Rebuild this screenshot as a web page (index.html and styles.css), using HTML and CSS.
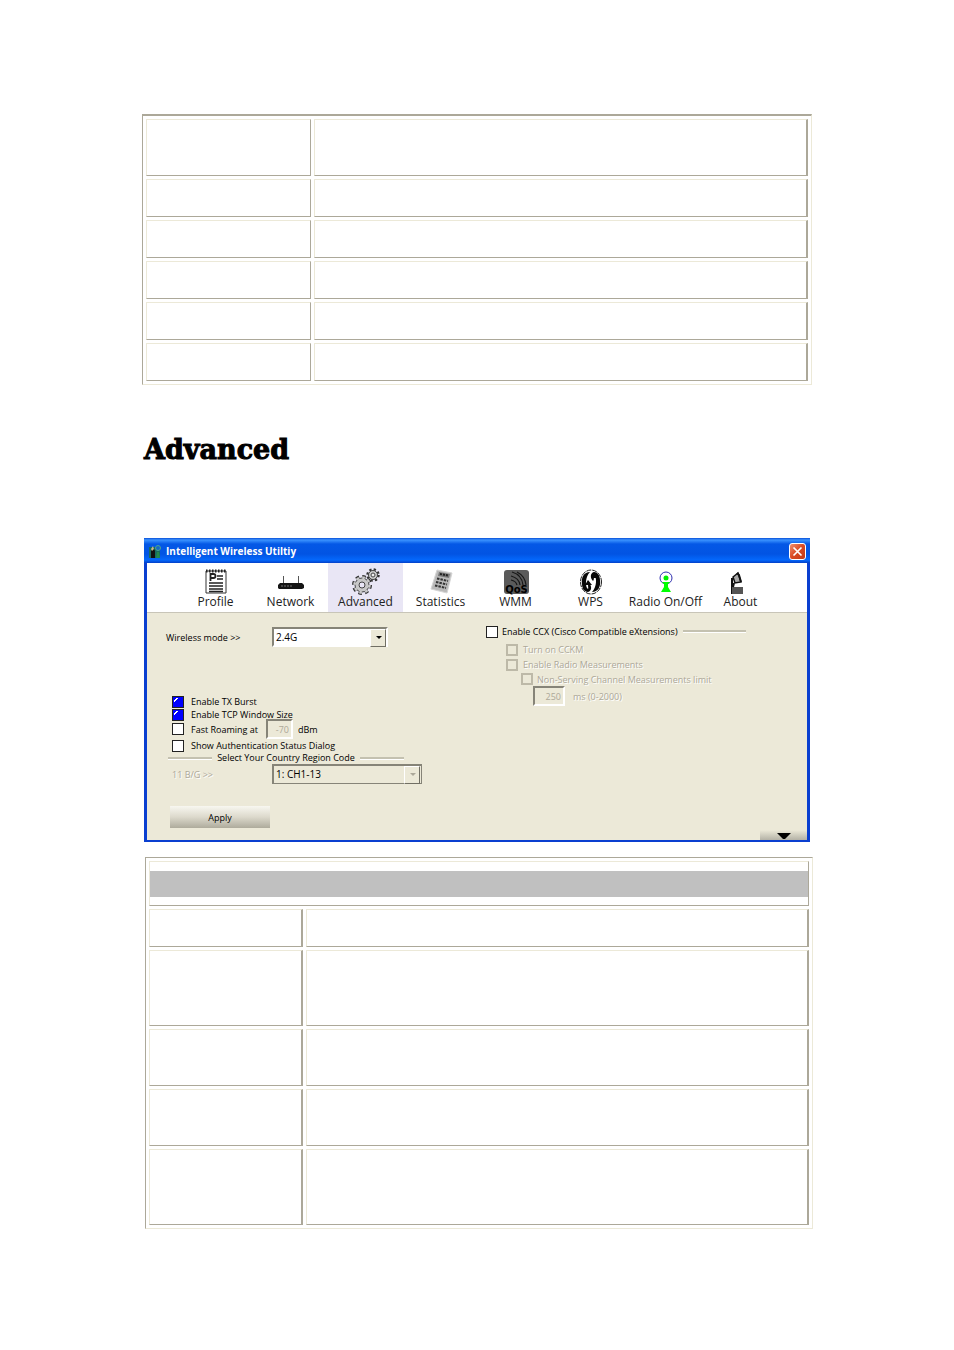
FILE: index.html
```html
<!DOCTYPE html>
<html lang="en">

<head>
  <meta charset="UTF-8">
  <meta name="viewport" content="width=device-width, initial-scale=1.0">
  <title>Advanced</title>
  <link rel="stylesheet" href="styles.css">
</head>

<body>
  <table class="grid settings">
    <tr class="medium"><td class="name"></td><td></td></tr>
    <tr><td class="name"></td><td></td></tr>
    <tr><td class="name"></td><td></td></tr>
    <tr><td class="name"></td><td></td></tr>
    <tr><td class="name"></td><td></td></tr>
    <tr><td class="name"></td><td></td></tr>
  </table>

  <h1>Advanced</h1>

  <div class="window">
    <div class="titlebar">
      <svg width="15" height="15" viewBox="0 0 15 15">
        <rect x="1" y="3" width="11" height="11" fill="#176c62"/>
        <path d="M3 14V7l2-4 2 4v7z" fill="#111"/>
        <path d="M3 5l2-3 1 3-2 2z" fill="#c9b98a"/>
        <circle cx="10" cy="4" r="2.5" fill="#1769c8" stroke="#4aa58f"/>
        <path d="M9 8h2l1 6H8z" fill="#238a50"/>
      </svg>
      <span class="title">Intelligent Wireless Utiltiy</span>
      <button class="close" aria-label="Close">
        <svg width="11" height="11" viewBox="0 0 11 11"><path d="M1.5 1.5l8 8M9.5 1.5l-8 8" stroke="#fff" stroke-width="1.700"/></svg>
      </button>
    </div>

    <nav class="toolbar">
      <button class="tab">
        <svg width="26" height="27" viewBox="0 0 26 27">
          <path d="M3 3h20v22H3z" fill="#fff" stroke="#333"/>
          <path d="M3 3h21" stroke="#222" stroke-width="3" stroke-dasharray="1.5 1.5"/>
          <path d="M7.500 13V6h3a2 2 0 0 1 0 4h-3" fill="none" stroke="#222" stroke-width="1.800"/>
          <path d="M14 8h6M14 11h6M6 15h14M6 18h14M6 21h14M6 23.500h14" stroke="#222" stroke-width="1.300"/>
        </svg>
        Profile
      </button>
      <button class="tab">
        <svg width="28" height="27" viewBox="0 0 28 27">
          <path d="M6.500 8v8M21.500 8v8" stroke="#555"/>
          <path d="M3 15h22l2 2v3l-2 1H2l-1-1v-3z" fill="#151515"/>
          <path d="M4 18h12" stroke="#777" stroke-dasharray="2 1"/>
        </svg>
        Network
      </button>
      <button class="tab active">
        <svg width="30" height="27" viewBox="0 0 30 27">
          <circle cx="11" cy="17" r="8" fill="none" stroke="#333" stroke-width="4" stroke-dasharray="3.300 2.983"/>
          <circle cx="11" cy="17" r="7" fill="#c7c7c7" stroke="#444"/>
          <circle cx="11" cy="17" r="7.500" fill="none" stroke="#ccc" stroke-width="2.500" stroke-dasharray="2.600 3.290"/>
          <circle cx="11" cy="17" r="3" fill="#e9e6f6" stroke="#444"/>
          <circle cx="22" cy="7" r="5.500" fill="none" stroke="#333" stroke-width="2.500" stroke-dasharray="2.200 2.120"/>
          <circle cx="22" cy="7" r="4.500" fill="#ccc" stroke="#444"/>
          <circle cx="22" cy="7" r="2" fill="#eee" stroke="#444"/>
        </svg>
        Advanced
      </button>
      <button class="tab">
        <svg width="26" height="27" viewBox="0 0 26 27">
          <path d="M9 2l15 3-5 20-16-4z" fill="#b9b9b9" stroke="#d5d5d5"/>
          <path d="M11 4l11 2-1 4-11-2z" fill="#777"/>
          <path d="M12 6l8 1.500" stroke="#222" stroke-width="2" stroke-dasharray="2 1"/>
          <path d="M9 10.500l11 2.500M8 14l11 2.500M7 17.500l11 2.500" stroke="#333" stroke-width="2" stroke-dasharray="2.500 1"/>
        </svg>
        Statistics
      </button>
      <button class="tab">
        <svg width="26" height="27" viewBox="0 0 26 27">
          <rect x="1" y="2" width="25" height="24" rx="3" fill="#5a5a5a"/>
          <path d="M9 4q10 3 11 13M8 8q8 2 9 9M8 12q5 1 6 5M14 4q8 4 9 13" fill="none" stroke="#171717" stroke-width="1.200"/>
          <text class="qos" x="13.500" y="25" text-anchor="middle">QoS</text>
        </svg>
        WMM
      </button>
      <button class="tab">
        <svg width="26" height="27" viewBox="0 0 26 27">
          <ellipse cx="13" cy="14" rx="10.500" ry="12" fill="#fff" stroke="#222" stroke-dasharray="5 1"/>
          <path d="M12 4C6 4 3 9 4 16c0 5 3 8 6 8 4-1 4-6 1-9-2 2 0 5-1 6-3-2-3-12 2-17z" fill="#080808"/>
          <path d="M10 12l4 5H7z" fill="#080808"/>
          <path d="M14 24c6 0 9-5 8-12 0-5-3-8-6-8-4 1-4 6-1 9 2-2 0-5 1-6 3 2 3 12-2 17z" fill="#080808"/>
          <path d="M16 4l5 6h-8z" fill="#080808"/>
        </svg>
        WPS
      </button>
      <button class="tab">
        <svg width="26" height="27" viewBox="0 0 26 27">
          <circle cx="13" cy="10" r="6" fill="#fff" stroke="#3030b0"/>
          <circle cx="13" cy="10" r="2.500" fill="#00f000"/>
          <path d="M9 14h8l-2 2v3l3 5H8l3-5v-3z" fill="#0f0"/>
        </svg>
        Radio On/Off
      </button>
      <button class="tab">
        <svg width="26" height="27" viewBox="0 0 26 27">
          <path d="M4 10v16" stroke="#111" stroke-width="2"/>
          <rect x="4" y="19" width="11" height="7" fill="#555"/>
          <path d="M5 9l5-4 3 9-6 1z" fill="#aaa" stroke="#111" stroke-width="1.500"/>
          <path d="M9 5l2 2 2 7M6 15l-1 4" fill="none" stroke="#111" stroke-width="2"/>
        </svg>
        About
      </button>
    </nav>

    <form class="panel">
      <div class="left">
        <div class="row mode">
          <label class="caption" for="mode">Wireless mode &gt;&gt;</label>
          <span class="select"><select id="mode"><option>2.4G</option></select></span>
        </div>

        <div class="checks">
          <label class="row"><input type="checkbox" checked>Enable TX Burst</label>
          <label class="row"><input type="checkbox" checked>Enable TCP Window Size</label>
          <div class="row roaming">
            <input type="checkbox" id="roaming"><label for="roaming">Fast Roaming at</label>
            <input type="text" class="dbm" value="-70" aria-label="Roaming threshold" disabled>
            <span>dBm</span>
          </div>
          <label class="row"><input type="checkbox">Show Authentication Status Dialog</label>
        </div>

        <div class="divider">Select Your Country Region Code</div>

        <div class="row region">
          <label class="caption off" for="region">11 B/G &gt;&gt;</label>
          <span class="select wide"><select id="region" disabled><option>1: CH1-13</option></select></span>
        </div>

        <button type="button" class="apply">Apply</button>
      </div>

      <div class="right">
        <div class="row ccx"><input type="checkbox" id="ccx"><label for="ccx">Enable CCX (Cisco Compatible eXtensions)</label></div>
        <label class="row off indent"><input type="checkbox" disabled>Turn on CCKM</label>
        <label class="row off indent"><input type="checkbox" disabled>Enable Radio Measurements</label>
        <label class="row off limit"><input type="checkbox" disabled>Non-Serving Channel Measurements limit</label>
        <label class="row off ms"><input type="text" value="250" disabled>ms (0-2000)</label>
      </div>

      <button type="button" class="expand" aria-label="Expand">
        <svg width="14" height="7" viewBox="0 0 14 7"><path d="M0 0h14L8 6H6z" fill="#000"/></svg>
      </button>
    </form>
  </div>

  <table class="grid options">
    <colgroup><col class="name"><col></colgroup>
    <tr class="head"><th colspan="2"><div class="band"></div></th></tr>
    <tr><td></td><td></td></tr>
    <tr class="tall"><td></td><td></td></tr>
    <tr class="medium"><td></td><td></td></tr>
    <tr class="medium"><td></td><td></td></tr>
    <tr class="tall"><td></td><td></td></tr>
  </table>
</body>

</html>
```
FILE: styles.css
```css
* {
  box-sizing: border-box;
}

body {
  margin: 0;
  padding: 114px 142px 120px;
  background: #fff;
  color: #000;
  font-family: "Open Sans", sans-serif;
}

button,
input,
select {
  font: inherit;
  margin: 0;
}

/* bordered tables */
.grid {
  width: 100%;
  table-layout: fixed;
  border-collapse: separate;
  border-spacing: 3px;
  border: 1px solid;
  border-color: #aca899 #ece9d8 #ece9d8 #aca899;
}

.grid td,
.grid th {
  height: 38px;
  padding: 0;
  border: 1px solid;
  border-color: #ece9d8 #aca899 #aca899 #ece9d8;
}

.grid td:last-child,
.options td {
  border-right-width: 2px;
}

.grid .name {
  width: 165px;
}

.grid .medium td {
  height: 57px;
}

.grid .tall td {
  height: 76px;
}

.settings {
  border-top-width: 2px;
}

.options {
  width: calc(100% - 2px);
  margin: 15px 0 0 3px;
}

.options .name {
  width: 154px;
}

.grid th {
  height: 45px;
}

.band {
  height: 26px;
  background: #c0c0c0;
}

h1 {
  margin: 46px 2px 69px;
  font-family: "DejaVu Serif", serif;
  font-size: 27px;
  font-weight: bold;
  line-height: 38px;
  -webkit-text-stroke: 1px #000;
}

/* utility window */
.window {
  margin: 0 2px;
  border: solid #0a3fd0;
  border-width: 0 3px 2px;
  background: #ece9d8;
  font-size: 9px;
}

.titlebar {
  display: flex;
  align-items: center;
  gap: 3px;
  height: 25px;
  margin: 0 -3px;
  padding: 1px 4px 0;
  background: linear-gradient(#0a4fd8, #3a93ff 2px, #0458e6 6px, #0254e3 16px, #0468fc 22px, #0340c8);
}

.title {
  flex: 1;
  color: #fff;
  font-size: 10px;
  font-weight: bold;
}

.close {
  display: flex;
  align-items: center;
  justify-content: center;
  width: 17px;
  height: 17px;
  padding: 0;
  border: 1px solid #fff;
  border-radius: 3px;
  background: linear-gradient(135deg, #f09070, #d94a22 50%, #c03a18);
}

.toolbar {
  display: flex;
  height: 50px;
  padding-left: 31px;
  background: #fff;
  border-bottom: 1px solid #c8c5b8;
}

.tab {
  display: flex;
  flex-direction: column;
  align-items: center;
  width: 75px;
  padding: 5px 0 0;
  border: 0;
  background: none;
  color: #222;
  font-size: 12px;
  line-height: 14px;
  white-space: nowrap;
}

.tab.active {
  background: #e9e6f5;
}

.qos {
  font: bold 10px "DejaVu Sans", sans-serif;
}

.panel {
  position: relative;
  display: flex;
  padding: 12px 18px 12px 19px;
  line-height: 13px;
}

.left {
  width: 320px;
}

.right {
  flex: 1;
}

.row {
  display: flex;
  align-items: center;
  white-space: nowrap;
}

.caption {
  width: 106px;
}

.off {
  color: #aca899;
  text-shadow: 1px 1px #fff;
}

.mode {
  height: 24px;
}

.region .caption {
  padding-left: 6px;
}

.select {
  position: relative;
  width: 116px;
}

.select.wide {
  width: 150px;
}

.select select {
  display: block;
  width: 100%;
  height: 20px;
  padding: 0 2px;
  appearance: none;
  border: 2px solid;
  border-color: #868478 #fff #fff #868478;
  border-radius: 0;
  background: #fff;
  color: #000;
  font-size: 10px;
}

.select select:disabled {
  background: #ece9d8;
  border-width: 2px 1px 1px 2px;
  border-color: #868478;
  opacity: 1;
}

.select::before {
  content: "";
  position: absolute;
  top: 2px;
  right: 2px;
  width: 14px;
  height: 16px;
  border: 1px solid;
  border-color: #fff #716f64 #716f64 #fff;
  background: #ece9d8;
  pointer-events: none;
}

.select::after {
  content: "";
  position: absolute;
  top: 9px;
  right: 6px;
  border: 3px solid transparent;
  border-top-color: #000;
  border-bottom: 0;
  pointer-events: none;
}

.select.wide::after {
  border-top-color: #aca899;
}

input[type="checkbox"] {
  flex: none;
  width: 12px;
  height: 12px;
  margin-right: 7px;
  appearance: none;
  border: 1px solid #222;
  background: #fff;
}

input[type="checkbox"]:checked {
  background: linear-gradient(135deg, #00f 20%, #fff 20%, #fff 35%, #00f 35%) no-repeat 1px 1px / 6px 6px #00f;
}

input[type="checkbox"]:disabled {
  border: 2px solid #bdb9a8;
  background: #ece9d8;
}

input[type="text"] {
  height: 20px;
  padding: 0 2px;
  border: 2px solid;
  border-color: #868478 #fff #fff #868478;
  background: #ece9d8;
  color: #aca899;
  text-align: right;
}

.checks {
  padding: 46px 0 0 6px;
}

.checks .row {
  height: 13px;
}

.checks .roaming {
  height: 16px;
  margin-bottom: 2px;
}

.roaming .dbm {
  width: 27px;
  margin: 0 5px 0 8px;
}

.divider {
  display: flex;
  align-items: center;
  gap: 5px;
  width: 238px;
  padding-left: 2px;
  line-height: 12px;
  white-space: nowrap;
}

.divider::before,
.divider::after,
.ccx::after {
  content: "";
  flex: 1;
  height: 2px;
  background: #c4c1b0;
  border-bottom: 1px solid #fff;
}

.region {
  height: 20px;
}

.apply {
  width: 100px;
  height: 22px;
  margin: 22px 0 0 4px;
  padding: 0;
  border: 0;
  background: linear-gradient(#f8f7f0, #dcd9cc 50%, #aeab9c);
}

.ccx {
  width: 260px;
  height: 13px;
  margin-bottom: 4px;
}

.ccx input[type="checkbox"] {
  margin-right: 4px;
}

.ccx::after {
  margin-left: 5px;
}

.indent {
  height: 15px;
  padding-left: 20px;
}

.indent input[type="checkbox"] {
  margin-right: 5px;
}

.limit {
  height: 14px;
  padding-left: 35px;
}

.limit input[type="checkbox"] {
  margin-right: 4px;
}

.ms {
  padding-left: 47px;
}

.ms input {
  width: 32px;
  margin-right: 8px;
}

/* sits in the lower corner, over the panel */
.expand {
  position: absolute;
  right: 0;
  bottom: 0;
  display: flex;
  justify-content: center;
  align-items: flex-end;
  width: 47px;
  height: 10px;
  padding: 0;
  border: 0;
  background: linear-gradient(#ece9d8, #b4b2a6);
}
```
